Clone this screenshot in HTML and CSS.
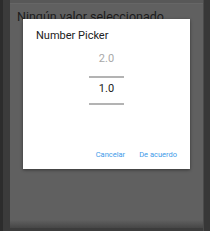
FILE: index.html
```html
<!DOCTYPE html>
<html lang="es">
<head>
    <meta charset="UTF-8">
    <meta name="viewport" content="width=device-width, initial-scale=1.0">
    <title>Number Picker</title>
    <link rel="stylesheet" href="styles.css">
</head>
<body>
    <div class="screen">
        <div class="edge-left"></div>
        <div class="rail-left"></div>
        <div class="content">
            <div class="top-card"></div>
            <p class="status">Ningún valor seleccionado</p>
            <div class="spacer"></div>
            <div class="bottom-shade"></div>
            <div class="bottom-bar"></div>
        </div>
        <div class="rail-right"></div>
    </div>

    <div class="dialog">
        <div class="dialog-title">Number Picker</div>
        <div class="picker">
            <div class="value prev">2.0</div>
            <div class="divider first"></div>
            <div class="value current">1.0</div>
            <div class="divider second"></div>
        </div>
        <div class="actions">
            <button class="action">Cancelar</button>
            <button class="action">De acuerdo</button>
        </div>
    </div>
</body>
</html>
```

FILE: styles.css
```css
body {
    margin: 0;
    padding: 0;
    width: 210px;
    height: 231px;
    overflow: hidden;
    background: #2f2f2f;
    font-family: Roboto, "Noto Sans", sans-serif;
    position: relative;
}

.screen {
    display: flex;
    height: 231px;
}

.edge-left {
    width: 3px;
    background: #2c2c2c;
}

.rail-left {
    width: 7px;
    background: #3b3b3b;
}

.content {
    flex: 1;
    display: flex;
    flex-direction: column;
    background: #606060;
}

.top-card {
    height: 3px;
    background: #585858;
    border-bottom: 1px solid #666;
}

.status {
    margin: 5px 0 0 7px;
    font-size: 12.5px;
    line-height: 15px;
    color: #1c1c1c;
    white-space: nowrap;
}

.spacer {
    flex: 1;
}

.bottom-shade {
    height: 8px;
    background: linear-gradient(#606060, #464646);
}

.bottom-bar {
    height: 3px;
    background: #3c3c3c;
}

.rail-right {
    width: 7px;
    background: #373737;
    border-left: 1px solid #4a4a4a;
    box-sizing: border-box;
}

.dialog {
    position: absolute;
    left: 23px;
    top: 19px;
    width: 167px;
    height: 150px;
    background: #fff;
    box-shadow: 0 1px 3px rgba(0, 0, 0, 0.45);
    display: flex;
    flex-direction: column;
}

.dialog-title {
    margin: 10px 0 0 13px;
    font-size: 11px;
    line-height: 13px;
    color: #212121;
}

.picker {
    display: flex;
    flex-direction: column;
    align-items: center;
}

.value {
    font-size: 11px;
    line-height: 13px;
    height: 13px;
}

.value.prev {
    margin-top: 10px;
    color: #a8a8a8;
}

.value.current {
    margin-top: 4px;
    color: #212121;
}

.divider {
    width: 35px;
    height: 2px;
    background: #b3b3b3;
}

.divider.first {
    margin-top: 11px;
}

.divider.second {
    margin-top: 8px;
}

.actions {
    margin-top: auto;
    display: flex;
    justify-content: flex-end;
    gap: 14px;
    padding: 0 13px 9px 0;
}

.action {
    padding: 0;
    border: none;
    background: none;
    font-family: Roboto, "Noto Sans", sans-serif;
    font-size: 7.5px;
    line-height: 10px;
    color: #3d9be9;
}
```
